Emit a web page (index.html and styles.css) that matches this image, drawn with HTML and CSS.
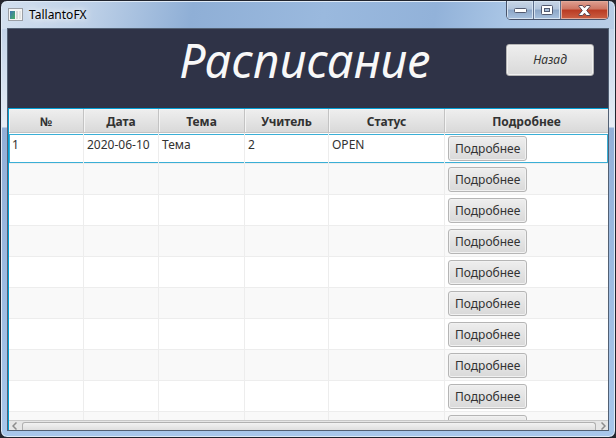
FILE: index.html
```html
<!DOCTYPE html>
<html lang="ru">
<head>
<meta charset="utf-8">
<title>TallantoFX</title>
<link rel="stylesheet" href="styles.css">
</head>
<body>
<div class="window">
  <div class="titlebar">
    <svg class="app-icon" width="15" height="13" viewBox="0 0 15 13" aria-hidden="true">
      <defs><linearGradient id="ic" x1="0" y1="0" x2="1" y2="1"><stop offset="0" stop-color="#3c75b4"/><stop offset="1" stop-color="#48b060"/></linearGradient></defs>
      <rect x=".5" y=".5" width="14" height="12" fill="#f5f5f5" stroke="#9b9fa5"/>
      <rect x="2" y="3" width="5" height="8" fill="url(#ic)"/>
      <rect x="8" y="3" width="2" height="8" fill="#d5d8d8"/>
      <rect x="11" y="3" width="2" height="8" fill="#e3e5e5"/>
    </svg>
    <span class="caption">TallantoFX</span>
    <div class="controls">
      <button class="ctl" aria-label="Свернуть"><svg width="13" height="6" viewBox="0 0 13 6"><rect x=".5" y="1.5" width="12" height="4" rx="1" fill="#fff" stroke="#535a70"/></svg></button>
      <button class="ctl" aria-label="Развернуть"><svg width="12" height="10" viewBox="0 0 12 10"><rect x=".5" y=".5" width="11" height="9" rx="1" fill="#fff" stroke="#535a70"/><rect x="3.5" y="3.5" width="5" height="3" fill="#a9bfd9" stroke="#535a70"/></svg></button>
      <button class="ctl close" aria-label="Закрыть"><svg width="13" height="11" viewBox="0 0 13 11"><path d="M1 .5h3.5l2 2.3 2-2.3H12v1L8.7 5.5 12 9.5v1H8.500l-2-2.300-2 2.300H1v-1l3.300-4L1 1.500z" fill="#fff" stroke="#5b4650"/></svg></button>
    </div>
  </div>
  <main class="client">
    <header class="header">
      <h1>Расписание</h1>
      <button class="btn back">Назад</button>
    </header>
    <section class="grid">
      <div class="viewport">
        <table>
          <colgroup><col class="c-num"><col class="c-date"><col class="c-topic"><col class="c-teacher"><col class="c-status"><col></colgroup>
          <thead><tr><th>№</th><th>Дата</th><th>Тема</th><th>Учитель</th><th>Статус</th><th>Подробнее</th></tr></thead>
          <tbody>
            <tr class="focused"><td>1</td><td>2020-06-10</td><td>Тема</td><td>2</td><td>OPEN</td><td><button class="btn">Подробнее</button></td></tr>
            <tr><td></td><td></td><td></td><td></td><td></td><td><button class="btn">Подробнее</button></td></tr>
            <tr><td></td><td></td><td></td><td></td><td></td><td><button class="btn">Подробнее</button></td></tr>
            <tr><td></td><td></td><td></td><td></td><td></td><td><button class="btn">Подробнее</button></td></tr>
            <tr><td></td><td></td><td></td><td></td><td></td><td><button class="btn">Подробнее</button></td></tr>
            <tr><td></td><td></td><td></td><td></td><td></td><td><button class="btn">Подробнее</button></td></tr>
            <tr><td></td><td></td><td></td><td></td><td></td><td><button class="btn">Подробнее</button></td></tr>
            <tr><td></td><td></td><td></td><td></td><td></td><td><button class="btn">Подробнее</button></td></tr>
            <tr><td></td><td></td><td></td><td></td><td></td><td><button class="btn">Подробнее</button></td></tr>
            <tr><td></td><td></td><td></td><td></td><td></td><td><button class="btn" aria-label="Подробнее"></button></td></tr>
          </tbody>
        </table>
      </div>
      <div class="scrollbar">
        <svg width="5" height="8" viewBox="0 0 5 8"><path d="M4.500 .5L1 4l3.500 3.500" fill="none" stroke="#8c8c8c" stroke-width="1.500"/></svg>
        <div class="thumb"></div>
        <svg width="5" height="8" viewBox="0 0 5 8"><path d="M.5 .5L4 4 .5 7.500" fill="none" stroke="#8c8c8c" stroke-width="1.500"/></svg>
      </div>
    </section>
  </main>
</div>
</body>
</html>
```
FILE: styles.css
```css
* { box-sizing: border-box; }

body {
  margin: 0;
  background: #25262e;
  color: #323232;
  font-family: "Noto Sans", "Open Sans", sans-serif;
  font-size: 12px;
}

button { font: inherit; color: inherit; }

.window {
  display: flex;
  flex-direction: column;
  height: 100vh;
  padding: 0 6px 6px;
  border: 1px solid #20242e;
  border-radius: 7px;
  background:
    linear-gradient(100deg, #d3e0ef 0, #bdd0e7 90px, #8fafd6 190px, #9ab9de 320px, #92b2d9 430px, #a9c5e5 500px, #b9cde6 100%) top / 100% 28px no-repeat,
    linear-gradient(#c4d4e9 28px, #e6edf5 126px, #92b0d8 127px, #a8c7eb 100%);
  box-shadow: inset 0 0 0 1px #dfeaf6;
}

.titlebar {
  display: flex;
  flex: 0 0 27px;
  align-items: center;
  gap: 6px;
  padding-left: 1px;
}

.caption {
  flex: 1;
  color: #000;
  text-shadow: 0 0 6px #fff, 0 0 10px #fff;
}

.controls {
  display: flex;
  align-self: flex-start;
  height: 19px;
  border: 1px solid #48536a;
  border-top: 0;
  border-radius: 0 0 5px 5px;
  overflow: hidden;
}

.ctl {
  display: flex;
  align-items: center;
  justify-content: center;
  width: 27px;
  padding: 0;
  border: 0;
  border-right: 1px solid #5f6f8c;
  background: linear-gradient(#c9d6e6 0, #b3c5dc 45%, #8ca6c7 50%, #a9c2df 100%);
  box-shadow: inset 0 0 0 1px #d6e3f1;
}

.close {
  width: 47px;
  border-right: 0;
  background: linear-gradient(#dfa092 0, #cd7562 45%, #b93b23 50%, #cb6044 100%);
  box-shadow: inset 0 0 0 1px #e2a999;
}

.client {
  display: flex;
  flex: 1;
  flex-direction: column;
  min-height: 0;
  border: 1px solid #526073;
  background: #fff;
}

.header {
  display: grid;
  grid-template-columns: 1fr auto 1fr;
  flex: 0 0 79px;
  align-items: start;
  background: #2f3347;
}

h1 {
  grid-column: 2;
  margin: 0;
  padding-right: 6px;
  color: #f8f8f8;
  font-size: 47px;
  font-style: italic;
  font-weight: 400;
  line-height: 62px;
}

.btn {
  display: block;
  height: 25px;
  min-width: 79px;
  padding: 0 6px;
  border: 1px solid #b5b5b5;
  border-radius: 3px;
  background: linear-gradient(#eeeeee, #d9d9d9);
  box-shadow: inset 0 0 0 1px #f1f1f1;
  line-height: 22px;
}

.back {
  justify-self: end;
  width: 88px;
  height: 32px;
  margin: 15px 14px 0 0;
  font-style: italic;
}

.grid {
  display: flex;
  flex: 1;
  flex-direction: column;
  min-height: 0;
  border-top: 1px solid #039ed3;
  border-left: 1px solid #039ed3;
}

.viewport {
  flex: 1;
  min-height: 0;
  overflow: hidden;
}

table {
  width: 100%;
  border-collapse: separate;
  border-spacing: 0;
  table-layout: fixed;
}

.c-num, .c-date { width: 75px; }
.c-topic { width: 86px; }
.c-teacher { width: 84px; }
.c-status { width: 116px; }

th {
  height: 24px;
  padding: 2px 0 0;
  border-right: 1px solid #c3c3c3;
  border-bottom: 1px solid #c3c3c3;
  background: linear-gradient(#efefef, #d9d9d9);
  box-shadow: inset 1px 1px 0 #f4f4f4;
  font-weight: 700;
  line-height: 16px;
}

td {
  height: 31px;
  padding: 3px 3px 2px;
  border-right: 1px solid #ededed;
  border-bottom: 1px solid #ededed;
  line-height: 18px;
  vertical-align: top;
}

th:last-child, td:last-child { border-right: 0; }

tbody tr:nth-child(even) { background: #f9f9f9; }

.focused td {
  box-shadow: inset 0 1px 0 #fff, inset 0 2px 0 #3aafd6, inset 0 -1px 0 #3aafd6;
}

.focused td:first-child {
  box-shadow: inset 0 1px 0 #fff, inset 0 2px 0 #3aafd6, inset 1px -1px 0 #3aafd6;
}

.focused td:last-child {
  box-shadow: inset 0 1px 0 #fff, inset 0 2px 0 #3aafd6, inset -1px -1px 0 #3aafd6;
}

.scrollbar {
  display: flex;
  flex: 0 0 10px;
  align-items: center;
  gap: 5px;
  padding: 1px 2px 0 3px;
  border-top: 1px solid #c8c8c8;
  background: #e6e6e6;
}

.thumb {
  flex: 1;
  height: 8px;
  border: 1px solid #b0b0b0;
  border-bottom: 0;
  border-radius: 3px 3px 0 0;
  background: linear-gradient(#f2f2f2, #dedede);
}
```
